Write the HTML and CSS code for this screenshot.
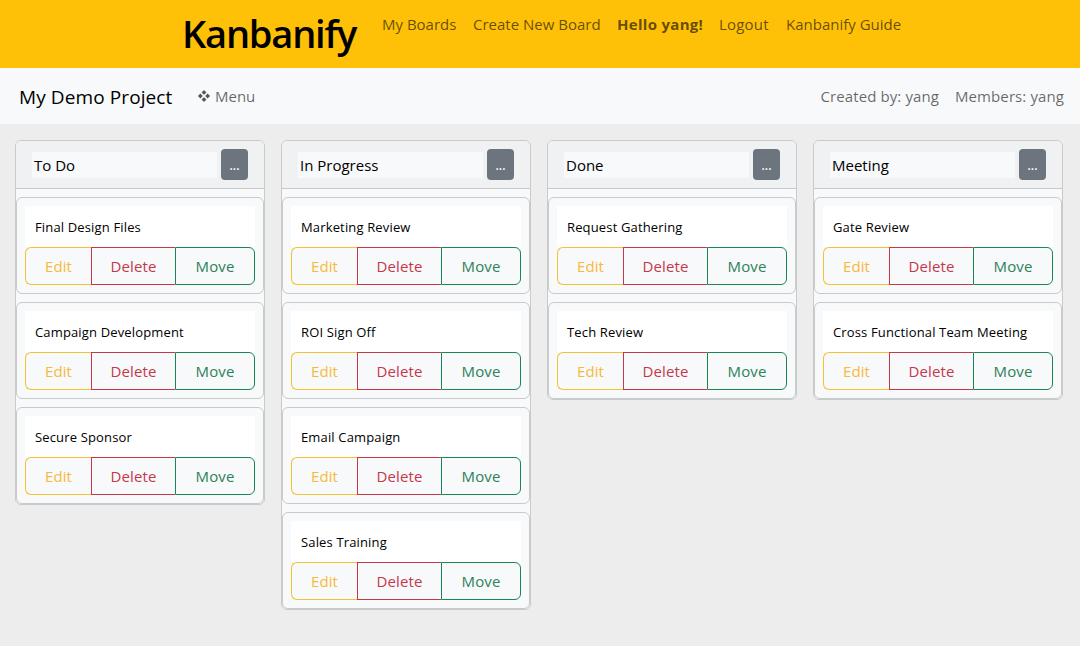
FILE: index.html
```html
<!DOCTYPE html>
<html lang="en">
<head>
<meta charset="utf-8">
<title>Kanbanify</title>
<link rel="stylesheet" href="styles.css">
</head>
<body>
<header class="topbar">
  <h1 class="brand">Kanbanify</h1>
  <nav class="links">
    <a class="link-boards">My Boards</a>
    <a class="link-create">Create New Board</a>
    <a class="link-hello">Hello yang!</a>
    <a class="link-logout">Logout</a>
    <a class="link-guide">Kanbanify Guide</a>
  </nav>
</header>
<div class="projectbar">
  <span class="project">My Demo Project</span>
  <a class="menu"><svg class="menu-icon" viewBox="0 0 12 12"><path d="M6 0l2.4 2.4L6 4.8 3.6 2.4zM6 7.2l2.4 2.4L6 12 3.6 9.6zM2.4 3.6L4.8 6 2.4 8.4 0 6zM9.6 3.6L12 6 9.6 8.4 7.2 6z"/></svg>Menu</a>
  <span class="meta created">Created by: yang</span>
  <span class="meta">Members: yang</span>
</div>
<main class="board">
  <section class="column">
    <div class="column-head"><div class="column-name">To Do</div><button class="more">...</button></div>
    <article class="card"><div class="card-title">Final Design Files</div><div class="actions"><button class="btn edit">Edit</button><button class="btn delete">Delete</button><button class="btn move">Move</button></div></article>
    <article class="card"><div class="card-title">Campaign Development</div><div class="actions"><button class="btn edit">Edit</button><button class="btn delete">Delete</button><button class="btn move">Move</button></div></article>
    <article class="card"><div class="card-title">Secure Sponsor</div><div class="actions"><button class="btn edit">Edit</button><button class="btn delete">Delete</button><button class="btn move">Move</button></div></article>
  </section>
  <section class="column">
    <div class="column-head"><div class="column-name">In Progress</div><button class="more">...</button></div>
    <article class="card"><div class="card-title">Marketing Review</div><div class="actions"><button class="btn edit">Edit</button><button class="btn delete">Delete</button><button class="btn move">Move</button></div></article>
    <article class="card"><div class="card-title">ROI Sign Off</div><div class="actions"><button class="btn edit">Edit</button><button class="btn delete">Delete</button><button class="btn move">Move</button></div></article>
    <article class="card"><div class="card-title">Email Campaign</div><div class="actions"><button class="btn edit">Edit</button><button class="btn delete">Delete</button><button class="btn move">Move</button></div></article>
    <article class="card"><div class="card-title">Sales Training</div><div class="actions"><button class="btn edit">Edit</button><button class="btn delete">Delete</button><button class="btn move">Move</button></div></article>
  </section>
  <section class="column">
    <div class="column-head"><div class="column-name">Done</div><button class="more">...</button></div>
    <article class="card"><div class="card-title">Request Gathering</div><div class="actions"><button class="btn edit">Edit</button><button class="btn delete">Delete</button><button class="btn move">Move</button></div></article>
    <article class="card"><div class="card-title">Tech Review</div><div class="actions"><button class="btn edit">Edit</button><button class="btn delete">Delete</button><button class="btn move">Move</button></div></article>
  </section>
  <section class="column">
    <div class="column-head"><div class="column-name">Meeting</div><button class="more">...</button></div>
    <article class="card"><div class="card-title">Gate Review</div><div class="actions"><button class="btn edit">Edit</button><button class="btn delete">Delete</button><button class="btn move">Move</button></div></article>
    <article class="card"><div class="card-title">Cross Functional Team Meeting</div><div class="actions"><button class="btn edit">Edit</button><button class="btn delete">Delete</button><button class="btn move">Move</button></div></article>
  </section>
</main>
</body>
</html>
```

FILE: styles.css
```css
* { box-sizing: border-box; }
body {
  margin: 0;
  min-height: 646px;
  background: #ededed;
  color: #000;
  font: 400 15px/24px "Open Sans", "Noto Sans", sans-serif;
  white-space: nowrap;
  overflow: hidden;
}
button { font: inherit; padding: 0; }
.topbar {
  display: flex;
  height: 68px;
  padding-left: 182px;
  background: #ffc107;
}
.brand {
  width: 192px;
  margin: 0;
  padding-top: 9px;
  font-size: 38px;
  line-height: 48px;
  font-weight: 600;
  letter-spacing: -1.2px;
}
.links { display: flex; padding-top: 12px; color: rgba(0, 0, 0, .62); }
.links a { padding-left: 8px; }
.link-boards { width: 91px; }
.link-create { width: 144px; }
.link-hello { width: 102px; font-weight: 700; letter-spacing: .3px; }
.link-logout { width: 67px; letter-spacing: .2px; }
.projectbar {
  display: flex;
  align-items: center;
  height: 56px;
  padding: 0 16px 0 19px;
  background: #f8f9fa;
  color: rgba(0, 0, 0, .6);
}
.project {
  width: 179px;
  padding-top: 1px;
  color: #000;
  font-size: 19px;
  line-height: 30px;
  letter-spacing: .1px;
}
.menu { display: flex; align-items: center; gap: 5px; }
.menu-icon { width: 12px; height: 12px; fill: #555; }
.meta { letter-spacing: .1px; }
.created { margin-left: auto; margin-right: 16px; }
.board {
  display: flex;
  align-items: flex-start;
  gap: 16px;
  padding: 16px 15px;
}
.column {
  width: 250px;
  flex: none;
  border: 1px solid #c9cacb;
  border-radius: 6px;
  background: #f8f9fa;
}
.column-head {
  display: flex;
  align-items: flex-start;
  height: 48px;
  padding: 8px 16px;
  border-bottom: 1px solid #c6c7c8;
  border-radius: 5px 5px 0 0;
  background: #f0f1f2;
}
.column-name {
  width: 185px;
  height: 26px;
  margin: 3px 4px 0 0;
  padding-left: 2px;
  line-height: 26px;
  background: #f8f9fa;
}
.more {
  width: 27px;
  height: 31px;
  border: 0;
  border-radius: 4px;
  background: #6c757d;
  color: #fff;
  font-size: 12px;
  font-weight: 600;
  line-height: 33px;
}
.card {
  margin-top: 8px;
  padding: 8px;
  border: 1px solid #c9cacb;
  border-radius: 6px;
}
.card-title {
  height: 41px;
  padding: 10px 0 0 10px;
  background: #fff;
  font-size: 13px;
  line-height: 22px;
  letter-spacing: .15px;
}
.actions { display: flex; }
.btn { height: 38px; border: 1px solid; background: transparent; letter-spacing: .1px; }
.edit { width: 66px; border-color: #f2c230; border-right: 0; border-radius: 6px 0 0 6px; color: #f7b93b; }
.delete { width: 84px; border-color: #c5384a; border-right: 0; color: #c5384a; }
.move { width: 80px; border-color: #198754; border-radius: 0 6px 6px 0; color: #2c8259; }
```
